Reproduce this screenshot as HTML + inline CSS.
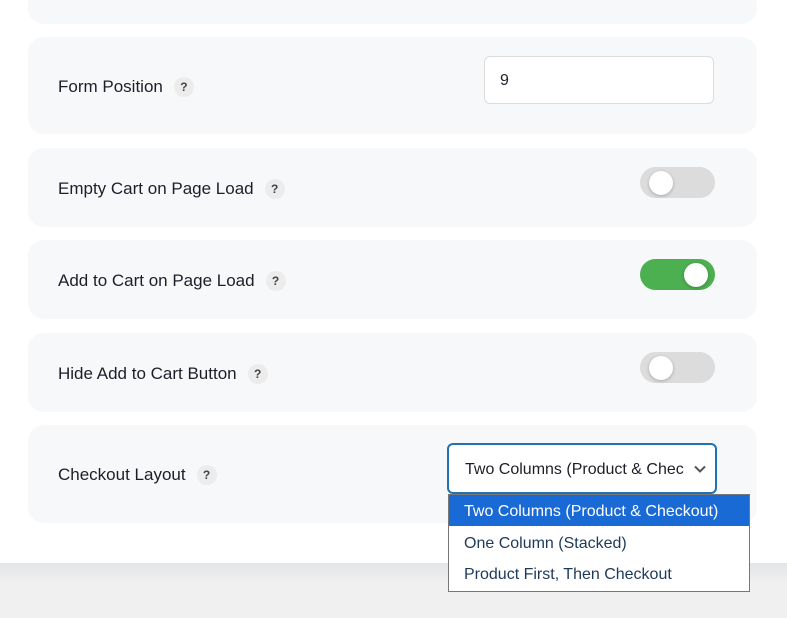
<!DOCTYPE html>
<html><head><style>
*{box-sizing:border-box;margin:0;padding:0}
body{width:787px;height:618px;overflow:hidden;background:#fff;font-family:"Liberation Sans",sans-serif;position:relative;color:#1e1e2a}
.bot{position:absolute;left:0;top:563px;width:787px;height:55px;background:linear-gradient(#e3e4e6,#f0f0f1 20px)}
.card{position:absolute;left:28px;width:729px;background:#f7f8fa;border-radius:16px}
.lbl{position:absolute;left:30px;font-size:17px;display:flex;align-items:center}
.q{display:inline-block;width:20px;height:20px;border-radius:50%;background:#ececec;color:#444;font-size:12px;font-weight:bold;text-align:center;line-height:20px;margin-left:11px}
.tg{position:absolute;left:612px;width:75px;height:31px;border-radius:16px;background:#dcdcdc}
.tg .k{position:absolute;top:3.5px;left:9px;width:24px;height:24px;border-radius:50%;background:#fff;box-shadow:0 1px 3px rgba(0,0,0,.25)}
.tg.on{background:#4caf50}.tg.on .k{left:44px}
</style></head><body>
<div class="card" style="top:-20px;height:44px"></div>
<div class="card" style="top:37px;height:97px"><div class="lbl" style="top:40px">Form Position<span class="q">?</span></div>
<div style="position:absolute;left:456px;top:19px;width:230px;height:48px;border:1px solid #dcdcdc;border-radius:6px;background:#fff;font-size:16px;padding:15px 15px">9</div></div>
<div class="card" style="top:148px;height:79px"><div class="lbl" style="top:31px">Empty Cart on Page Load<span class="q">?</span></div><div class="tg" style="top:19px"><div class="k"></div></div></div>
<div class="card" style="top:240px;height:79px"><div class="lbl" style="top:31px">Add to Cart on Page Load<span class="q">?</span></div><div class="tg on" style="top:19px"><div class="k"></div></div></div>
<div class="card" style="top:333px;height:79px"><div class="lbl" style="top:31px">Hide Add to Cart Button<span class="q">?</span></div><div class="tg" style="top:19px"><div class="k"></div></div></div>
<div class="card" style="top:425px;height:98px"><div class="lbl" style="top:40px">Checkout Layout<span class="q">?</span></div></div>
<div class="bot"></div>
<div style="position:absolute;left:447px;top:443px;width:270px;height:51px;border:2px solid #2271b1;border-radius:6px;background:#fff;font-size:16px;padding:16px 0 0 16px;white-space:nowrap;overflow:hidden">Two Columns (Product &amp; Chec
<svg style="position:absolute;right:9px;top:20px" width="12" height="8" viewBox="0 0 12 8"><path d="M1 1.5l5 5 5-5" fill="none" stroke="#555" stroke-width="2"/></svg></div>
<div style="position:absolute;left:448px;top:494px;width:302px;height:98px;border:1px solid #777;background:#fff;font-size:16px;color:#1d3a5a">
<div style="height:31px;background:#1a6ad6;color:#fff;padding:8px 0 0 15px">Two Columns (Product &amp; Checkout)</div>
<div style="height:32px;padding:9px 0 0 15px">One Column (Stacked)</div>
<div style="height:32px;padding:8px 0 0 15px">Product First, Then Checkout</div>
</div>
</body></html>
